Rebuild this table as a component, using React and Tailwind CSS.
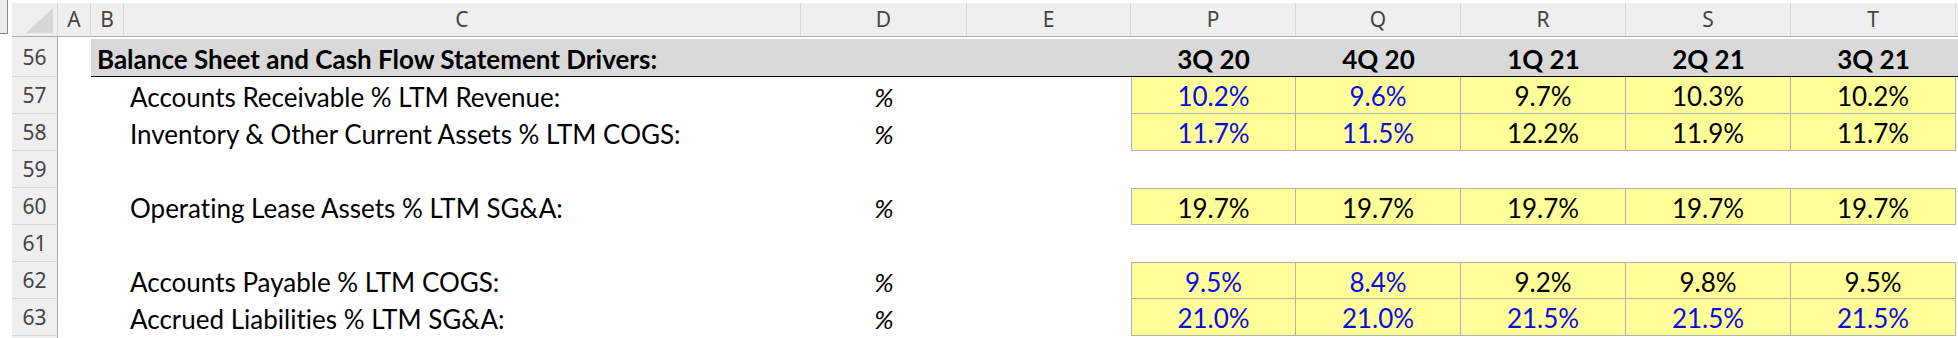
import React from "react"

const COLS = ["P", "Q", "R", "S", "T"]
const QUARTERS = ["3Q 20", "4Q 20", "1Q 21", "2Q 21", "3Q 21"]

const B = "text-[#0a0ae6]"
const K = "text-black"

// rows of the sheet; vals are [text, color] pairs for P..T
const rows = [
  {
    n: 57,
    label: "Accounts Receivable % LTM Revenue:",
    vals: [["10.2%", B], ["9.6%", B], ["9.7%", K], ["10.3%", K], ["10.2%", K]],
  },
  {
    n: 58,
    label: "Inventory & Other Current Assets % LTM COGS:",
    vals: [["11.7%", B], ["11.5%", B], ["12.2%", K], ["11.9%", K], ["11.7%", K]],
  },
  { n: 59 },
  {
    n: 60,
    top: true,
    label: "Operating Lease Assets % LTM SG&A:",
    vals: [["19.7%", K], ["19.7%", K], ["19.7%", K], ["19.7%", K], ["19.7%", K]],
  },
  { n: 61 },
  {
    n: 62,
    top: true,
    label: "Accounts Payable % LTM COGS:",
    vals: [["9.5%", B], ["8.4%", B], ["9.2%", K], ["9.8%", K], ["9.5%", K]],
  },
  {
    n: 63,
    label: "Accrued Liabilities % LTM SG&A:",
    vals: [["21.0%", B], ["21.0%", B], ["21.5%", B], ["21.5%", B], ["21.5%", B]],
  },
]

const RowNum = ({ n, h = "h-[37px]" }) => (
  <div
    className={`w-[46px] ${h} shrink-0 bg-[#efefef] border-r border-b border-r-[#ababab] border-b-[#d9d9d9] flex items-center justify-center pt-[2px] text-[21px] text-[#444] font-['Noto_Sans',sans-serif]`}
  >
    {n}
  </div>
)

const ColHead = ({ w, children }) => (
  <div
    className={`${w} h-full shrink-0 border-r border-[#d9d9d9] flex items-center justify-center text-[21px] text-[#444] font-['Noto_Sans',sans-serif]`}
  >
    {children}
  </div>
)

export default function App() {
  return (
    <div className="w-[1958px] h-[338px] bg-white overflow-hidden font-['Lato',sans-serif] text-black [font-variant-ligatures:none]">
      {/* column letters */}
      <div className="flex h-[37px]">
        <div className="w-[12px] shrink-0">
          <div className="w-[8px] h-[34px] bg-[#ececec] border-r border-b border-[#8a8a8a]"></div>
        </div>
        <div className="flex flex-1 mt-[3px] bg-[#efefef] border-b border-[#ababab]">
          <div className="w-[46px] shrink-0 flex items-end justify-end pr-[4px] pb-[3px] border-r border-[#d9d9d9]">
            <svg width="27" height="25" viewBox="0 0 27 25">
              <polygon points="27,0 27,25 0,25" fill="#d6d6d6" />
            </svg>
          </div>
          <ColHead w="w-[33px]">A</ColHead>
          <ColHead w="w-[33px]">B</ColHead>
          <ColHead w="w-[677px]">C</ColHead>
          <ColHead w="w-[166px]">D</ColHead>
          <ColHead w="w-[164px]">E</ColHead>
          {COLS.map((c) => (
            <ColHead key={c} w="w-[165px]">{c}</ColHead>
          ))}
        </div>
      </div>

      {/* row 56: section header */}
      <div className="flex">
        <div className="w-[12px] shrink-0"></div>
        <RowNum n={56} h="h-[40px]" />
        <div className="w-[33px] shrink-0"></div>
        <div className="flex flex-1 mt-[2px] h-[38px] bg-[#d9d9d9] border-b-[1.5px] border-black font-bold text-[26px]">
          <div className="w-[710px] shrink-0 flex items-center pl-[6px] pt-[3px]">
            Balance Sheet and Cash Flow Statement Drivers:
          </div>
          <div className="w-[330px] shrink-0"></div>
          {QUARTERS.map((q) => (
            <div key={q} className="w-[165px] shrink-0 flex items-center justify-center pt-[3px]">
              {q}
            </div>
          ))}
        </div>
      </div>

      {rows.map((r) => (
        <div key={r.n} className="flex h-[37px]">
          <div className="w-[12px] shrink-0"></div>
          <RowNum n={r.n} />
          <div className="w-[66px] shrink-0"></div>
          <div className="w-[677px] shrink-0 flex items-center pl-[6px] pt-[3px] text-[26px]">
            {r.label}
          </div>
          <div className="w-[166px] shrink-0 flex items-center justify-center pt-[3px] text-[26px] italic">
            {r.label ? "%" : ""}
          </div>
          <div className="w-[164px] shrink-0"></div>
          {r.vals &&
            r.vals.map(([v, c], i) => (
              <div
                key={i}
                className={`w-[165px] shrink-0 bg-[#ffff99] border-r border-b border-[#b2b2b2] flex items-center justify-center pt-[3px] text-[26px] ${c} ${
                  i === 0 ? "border-l" : ""
                } ${r.top ? "border-t" : ""}`}
              >
                {v}
              </div>
            ))}
        </div>
      ))}

      <div className="flex h-[37px]">
        <div className="w-[12px] shrink-0"></div>
        <RowNum n="" />
      </div>
    </div>
  )
}
